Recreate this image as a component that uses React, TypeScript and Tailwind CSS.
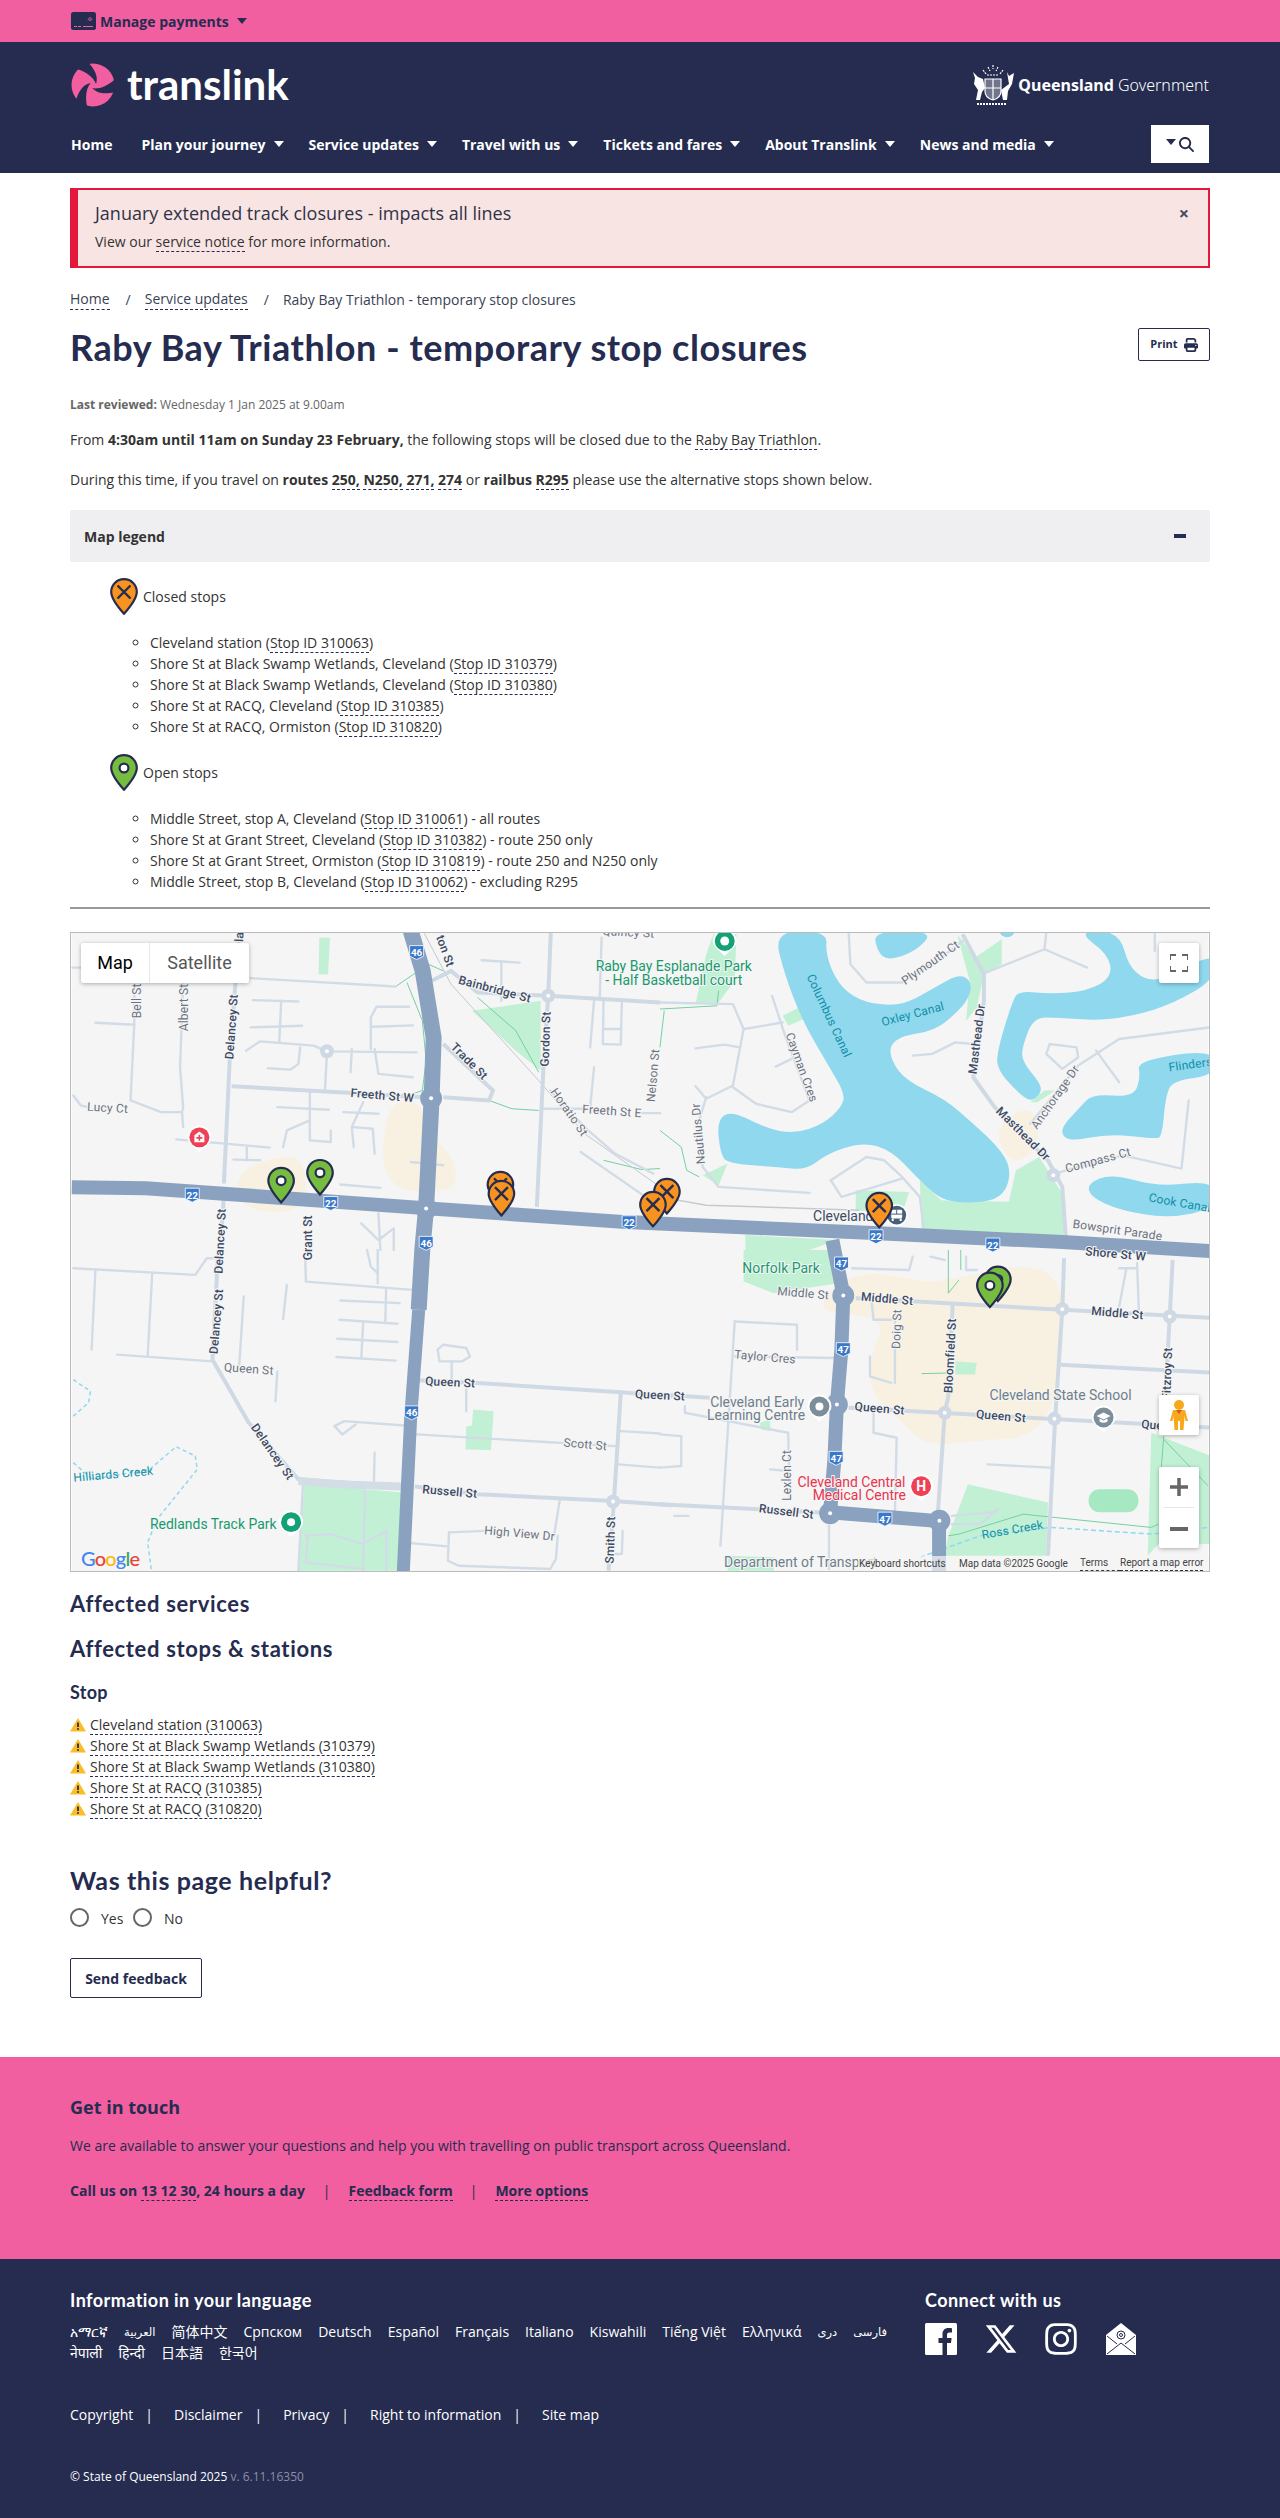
import type { ReactNode } from "react";
import { FaPrint, FaMagnifyingGlass, FaInstagram, FaXTwitter } from "react-icons/fa6";

type Pt = [number, number];
type Frame = "a" | "b" | "c" | "d";

// map is traced in four overlapping frames, all converted to page coords
const toPage = (f: Frame, [x, y]: Pt): Pt => {
    if (f === "a") return [60 + x / 2.613, 920 + y / 3];
    if (f === "b") return [660 + x / 2.8, 920 + y / 3];
    if (f === "c") return [60 + x / 2.613, 1250 + y / 3];
    return [660 + x / 2.8, 1250 + y / 3];
};

const line = (f: Frame, pts: Pt[]) =>
    pts.map((p, i) => {
        const [x, y] = toPage(f, p);
        return `${i ? "L" : "M"}${x.toFixed(1)} ${y.toFixed(1)}`;
    }).join(" ");

const blob = (f: Frame, pts: Pt[]) => {
    const p = pts.map((q) => toPage(f, q));
    const mid = (a: Pt, b: Pt): Pt => [(a[0] + b[0]) / 2, (a[1] + b[1]) / 2];
    const start = mid(p[p.length - 1], p[0]);
    let d = `M${start[0].toFixed(1)} ${start[1].toFixed(1)}`;
    p.forEach((q, i) => {
        const m = mid(q, p[(i + 1) % p.length]);
        d += ` Q${q[0].toFixed(1)} ${q[1].toFixed(1)} ${m[0].toFixed(1)} ${m[1].toFixed(1)}`;
    });
    return d + " Z";
};

const water: [Frame, Pt[]][] = [
    ["b", [[320, 30], [350, 160], [400, 300], [470, 430], [520, 520], [510, 560], [460, 610], [380, 640], [300, 625], [200, 570], [160, 600], [170, 700], [190, 730], [330, 740], [410, 750], [470, 700], [570, 665], [650, 690], [720, 770], [780, 830], [830, 848], [930, 845], [975, 810], [985, 740], [950, 680], [880, 610], [800, 535], [690, 480], [650, 420], [645, 375], [680, 345], [770, 330], [830, 280], [870, 230], [875, 180], [840, 160], [780, 195], [700, 245], [640, 255], [560, 240], [500, 190], [465, 100], [470, 30]]],
    ["b", [[600, 30], [770, 30], [720, 90], [640, 120], [610, 90]]],
    ["b", [[1010, 210], [1100, 220], [1200, 210], [1270, 170], [1260, 100], [1170, 30], [1290, 30], [1320, 150], [1400, 190], [1560, 90], [1560, 175], [1440, 250], [1330, 285], [1230, 300], [1120, 290], [1050, 290], [1020, 370], [1015, 420], [1070, 490], [1070, 520], [1040, 545], [1000, 510], [950, 450], [945, 400], [990, 240]]],
    ["b", [[1340, 420], [1560, 385], [1560, 465], [1440, 480], [1420, 530], [1410, 650], [1390, 655], [1260, 640], [1150, 665], [1120, 630], [1180, 560], [1215, 520], [1330, 530], [1350, 470]]],
    ["b", [[1200, 790], [1270, 760], [1400, 800], [1560, 780], [1560, 865], [1430, 895], [1290, 870], [1210, 830]]],
    ["b", [[945, 30], [1005, 30], [975, 55]]],
    ["b", [[670, 30], [700, 30], [690, 50]]],
];

const parks: [Frame, Pt[]][] = [
    ["a", [[675, 50], [703, 50], [698, 160], [673, 160]]],
    ["a", [[1075, 270], [1255, 240], [1255, 450], [1190, 390]]],
    ["b", [[100, 250], [130, 100], [150, 40], [215, 40], [210, 180], [165, 245]]],
    ["b", [[345, 285], [390, 260], [405, 295], [360, 315]]],
    ["b", [[120, 765], [190, 730], [165, 795]]],
    ["b", [[730, 780], [790, 840], [980, 845], [1000, 750], [1065, 710], [1130, 820], [1140, 950], [735, 930]]],
    ["b", [[550, 810], [700, 815], [680, 880], [550, 870]]],
    ["b", [[835, 40], [885, 110], [960, 55], [960, 130], [910, 160], [890, 260], [860, 300], [870, 180]]],
    ["b", [[1040, 545], [1080, 510], [1110, 510], [1060, 545]]],
    ["b", [[240, 945], [500, 960], [420, 990], [240, 990]]],
    ["c", [[635, 705], [895, 730], [880, 965], [620, 965]]],
    ["c", [[1078, 480], [1132, 485], [1125, 602], [1058, 600], [1060, 530], [1075, 528]]],
    ["d", [[235, 0], [470, 0], [500, 100], [320, 130], [235, 95]]],
    ["d", [[830, 335], [890, 340], [885, 375], [830, 375]]],
    ["d", [[865, 705], [1090, 760], [1085, 920], [800, 920], [810, 860]]],
    ["d", [[1380, 550], [1560, 625], [1560, 885], [1400, 885], [1370, 920]]],
    ["d", [[190, 920], [320, 925], [320, 965], [190, 965]]],
    ["d", [[280, 520], [310, 510], [310, 545], [285, 540]]],
];

const cream: [Frame, Pt[]][] = [
    ["a", [[850, 540], [945, 545], [945, 620], [1000, 680], [1035, 735], [1030, 820], [835, 810]]],
    ["a", [[455, 750], [600, 700], [640, 740], [640, 880], [465, 870]]],
    ["b", [[935, 620], [1050, 545], [1070, 680], [985, 740]]],
    ["d", [[540, 60], [730, 90], [770, 100], [1120, 20], [1140, 300], [1080, 560], [880, 575], [750, 590], [680, 520], [590, 430], [590, 320], [640, 200], [420, 190]]],
];

const smallRoads: [Frame, Pt[]][] = [
    ["a", [[495, 172], [875, 197]]], ["a", [[28, 140], [55, 140]]],
    ["a", [[190, 190], [190, 310], [180, 540], [260, 575], [315, 575], [318, 620]]], ["a", [[88, 306], [190, 312]]],
    ["a", [[318, 190], [310, 440], [318, 560], [315, 575]]], ["a", [[30, 525], [50, 555], [70, 560]]],
    ["a", [[500, 238], [620, 242]]], ["a", [[575, 240], [570, 365]]], ["a", [[495, 320], [630, 315]]],
    ["a", [[483, 390], [520, 362], [660, 375], [695, 392], [930, 395]]], ["a", [[625, 380], [620, 430], [600, 447], [540, 443]]],
    ["a", [[695, 392], [690, 505]]], ["a", [[760, 385], [757, 455]]], ["a", [[820, 385], [830, 460], [920, 470]]],
    ["a", [[910, 258], [825, 258], [810, 290], [810, 385]]], ["a", [[815, 318], [920, 314]]],
    ["a", [[565, 560], [700, 568]]], ["a", [[650, 515], [650, 660], [705, 665], [705, 630]]], ["a", [[580, 680], [590, 630], [650, 600]]],
    ["a", [[738, 575], [830, 580]]], ["a", [[790, 545], [760, 620], [765, 680]]], ["a", [[765, 620], [815, 625], [820, 700]]],
    ["a", [[300, 657], [545, 682]]], ["a", [[485, 682], [485, 720]]], ["a", [[450, 718], [520, 720]]],
    ["a", [[730, 793], [835, 803]]], ["a", [[915, 725], [1000, 735]]],
    ["a", [[1100, 118], [1200, 125]]], ["a", [[1152, 120], [1152, 240]]], ["a", [[1415, 50], [1410, 235]]],
    ["a", [[1395, 240], [1385, 380]]], ["a", [[1420, 240], [1418, 370], [1465, 372], [1468, 245]]], ["a", [[1418, 325], [1465, 325]]],
    ["a", [[1395, 440], [1385, 560]]], ["a", [[1280, 510], [1370, 620], [1450, 700], [1550, 760]]], ["a", [[1262, 565], [1365, 565]]],
    ["a", [[1360, 695], [1530, 830]]], ["a", [[1520, 578], [1568, 578]]], ["a", [[830, 880], [835, 990]]], ["a", [[785, 910], [830, 960], [870, 925], [870, 990]]],
    ["b", [[0, 245], [205, 250], [235, 325], [205, 495], [130, 535], [100, 497]]],
    ["b", [[530, 37], [535, 130], [580, 185], [680, 185], [790, 110], [850, 60]]],
    ["b", [[915, 155], [1080, 85], [1085, 37]]], ["b", [[1080, 85], [1200, 140]]], ["b", [[1390, 37], [1390, 90]]],
    ["b", [[315, 225], [350, 340], [420, 540], [370, 575], [270, 550], [205, 500]]],
    ["b", [[100, 383], [180, 372], [225, 380]]], ["b", [[325, 438], [370, 415]]], ["b", [[237, 325], [345, 305]]],
    ["b", [[710, 405], [765, 400], [830, 365], [880, 370]]], ["b", [[1040, 610], [1175, 435], [1290, 355], [1560, 318]]],
    ["b", [[1130, 445], [1085, 400], [1095, 370], [1170, 380], [1175, 410], [1130, 445]]], ["b", [[1225, 390], [1290, 485]]],
    ["b", [[1100, 765], [1140, 750], [1300, 705], [1465, 745], [1485, 540]]],
    ["b", [[130, 530], [110, 600], [120, 740], [165, 800], [420, 818]]],
    ["b", [[480, 780], [580, 710], [630, 720], [680, 770], [730, 830], [740, 920]]], ["b", [[480, 780], [510, 830], [680, 775]]],
    ["c", [[30, 55], [350, 75], [380, 25], [400, 25]]], ["c", [[88, 60], [78, 300]]], ["c", [[237, 70], [225, 320]]], ["c", [[145, 315], [395, 335]]],
    ["c", [[477, 140], [465, 345]]], ["c", [[590, 105], [580, 208]]], ["c", [[638, 30], [640, 95], [920, 120]]], ["c", [[730, 152], [885, 160]]],
    ["c", [[850, 120], [848, 215]]], ["c", [[728, 210], [880, 222]]], ["c", [[790, 220], [785, 325]]], ["c", [[722, 267], [880, 277]]], ["c", [[720, 322], [875, 333]]],
    ["c", [[800, 0], [810, 50], [828, 70]]], ["c", [[828, 0], [828, 100]]], ["c", [[565, 365], [560, 455]]],
    ["c", [[1022, 335], [1022, 395]]], ["c", [[1060, 420], [1060, 485]]], ["c", [[985, 300], [1000, 285], [1060, 295], [1070, 320], [1050, 335], [990, 335], [985, 300]]],
    ["c", [[715, 530], [740, 515], [900, 528]]], ["c", [[715, 530], [735, 555], [770, 525]]], ["c", [[930, 555], [1450, 590]]],
    ["c", [[820, 610], [818, 695]]], ["c", [[1465, 545], [1568, 552]]], ["c", [[1458, 645], [1568, 655]]],
    ["c", [[915, 882], [1010, 892]]], ["c", [[1015, 850], [1110, 845]]], ["c", [[1290, 860], [1305, 755]]],
    ["c", [[1015, 850], [1012, 935], [1040, 950], [1280, 960], [1295, 930], [1300, 860]]], ["c", [[1470, 845], [1468, 915], [1450, 915]]],
    ["c", [[632, 705], [620, 965]]], ["c", [[795, 725], [790, 965]]], ["c", [[640, 860], [705, 855], [790, 885], [850, 845], [850, 965]]], ["c", [[645, 860], [640, 940], [790, 960]]],
    ["d", [[210, 215], [385, 225], [385, 300]]], ["d", [[210, 215], [170, 890]]], ["d", [[210, 320], [490, 325]]],
    ["d", [[0, 555], [60, 560], [60, 650], [0, 655]]], ["d", [[70, 470], [70, 490], [360, 550], [365, 750]]],
    ["d", [[600, 470], [600, 550], [665, 565], [660, 790]]], ["d", [[660, 190], [660, 400]]], ["d", [[595, 160], [600, 210], [650, 210]]],
    ["d", [[590, 320], [590, 380], [650, 400]]], ["d", [[920, 645], [1095, 655]]], ["d", [[310, 660], [360, 665]]], ["d", [[40, 800], [80, 800]]], ["d", [[475, 830], [475, 960]]],
    ["d", [[1290, 170], [1310, 55]]], ["d", [[1290, 55], [1335, 55]]], ["d", [[1340, 40], [1345, 180]]],
    ["d", [[820, 800], [930, 790], [950, 780], [900, 825], [820, 825]]], ["d", [[710, 20], [700, 60], [540, 55]]], ["d", [[760, 20], [800, 30]]], ["d", [[860, 20], [860, 60], [890, 60]]],
];

const midRoads: [Frame, Pt[]][] = [
    ["a", [[465, 30], [455, 190], [440, 420], [425, 790]]], ["a", [[425, 830], [415, 990]]],
    ["c", [[410, 0], [395, 330], [490, 520], [620, 690], [890, 712]]],
    ["c", [[925, 712], [1090, 735], [1445, 755], [1600, 768]]],
    ["d", [[0, 765], [450, 790]]],
    ["a", [[1282, 30], [1275, 225], [1262, 450], [1245, 860]]],
    ["a", [[445, 497], [750, 517], [950, 530]]], ["a", [[1000, 530], [1120, 540], [1130, 510], [1000, 370]]],
    ["a", [[970, 180], [1020, 150], [1090, 215], [1275, 225], [1568, 245]]],
    ["b", [[850, 40], [910, 160], [910, 240], [880, 470], [940, 560], [1090, 720], [1130, 800], [1140, 950]]],
    ["c", [[935, 392], [1090, 400], [1465, 428], [1600, 440]]], ["c", [[1465, 430], [1448, 740]]], ["c", [[1447, 760], [1433, 965]]],
    ["d", [[0, 435], [140, 445]]], ["d", [[550, 145], [720, 155], [1130, 180], [1560, 205]]],
    ["d", [[822, 165], [810, 440], [800, 490], [780, 800]]], ["d", [[1135, 25], [1130, 180], [1110, 510], [1090, 920]]],
    ["d", [[1440, 30], [1432, 200], [1420, 435]]], ["d", [[1125, 345], [1560, 370]]], ["d", [[530, 475], [1560, 535]]],
];

const greenPaths: [Frame, Pt[]][] = [
    ["a", [[875, 197], [960, 130], [1000, 150]]], ["a", [[905, 185], [945, 300], [955, 420], [945, 510], [920, 520]]],
    ["a", [[1120, 540], [1180, 565], [1250, 570]]], ["a", [[1420, 720], [1520, 748], [1568, 745]]], ["a", [[1090, 230], [1190, 330], [1250, 455]]],
    ["b", [[0, 630], [60, 680], [75, 750], [110, 770]]], ["b", [[0, 265], [160, 255], [165, 210]]], ["b", [[12, 270], [0, 380]]],
    ["c", [[1025, 562], [1150, 570]]],
    ["d", [[735, 372], [820, 370]]], ["d", [[810, 860], [840, 855], [1020, 795], [1380, 835], [1400, 825]]], ["d", [[1415, 560], [1405, 700]]], ["d", [[1415, 570], [1540, 710]]],
    ["d", [[810, 0], [810, 130], [840, 90]]], ["d", [[845, 0], [845, 60]]],
];

const labels: [Frame, number, number, number, string, string][] = [
    ["a", 197, 240, -90, "Bell St", "g"], ["a", 320, 260, -90, "Albert St", "g"], ["a", 445, 318, -86, "Delancey St", "r"], ["a", 120, 562, 3, "Lucy Ct", "g"],
    ["a", 840, 525, 5, "Freeth St W", "r"], ["a", 1068, 422, 45, "Trade St", "r"], ["a", 1135, 205, 15, "Bainbridge St", "r"], ["a", 1268, 355, -88, "Gordon St", "r"],
    ["a", 1005, 90, 70, "ton St", "r"], ["a", 1550, 465, -85, "Nelson St", "g"], ["a", 1330, 575, 55, "Horatio St", "g"], ["a", 1442, 572, 4, "Freeth St E", "g"],
    ["a", 415, 963, -87, "Delancey St", "r"], ["a", 645, 953, -90, "Grant St", "r"], ["a", 465, 48, -88, "la", "r"], ["a", 1485, 34, 3, "Quincy St", "g"],
    ["b", 760, 125, -35, "Plymouth Ct", "g"], ["b", 475, 285, 65, "Columbus Canal", "t"], ["b", 710, 280, -15, "Oxley Canal", "t"], ["b", 398, 440, 70, "Cayman Cres", "g"],
    ["b", 108, 640, -95, "Nautilus Dr", "g"], ["b", 890, 355, -83, "Masthead Dr", "r"], ["b", 1020, 640, 45, "Masthead Dr", "r"], ["b", 1110, 530, -55, "Anchorage Dr", "g"],
    ["b", 1230, 720, -15, "Compass Ct", "g"], ["b", 1490, 432, -8, "Flinders", "t"], ["b", 1460, 848, 10, "Cook Canal", "t"], ["b", 1285, 930, 8, "Bowsprit Parade", "g"],
    ["d", 1280, 12, 5, "Shore St W", "r"],
    ["c", 405, 215, -85, "Delancey St", "r"], ["c", 490, 358, 4, "Queen St", "g"],
    ["c", 1018, 398, 3, "Queen St", "r"], ["d", 0, 437, 3, "Queen St", "r"], ["c", 1372, 585, 5, "Scott St", "g"], ["c", 552, 607, 55, "Delancey St", "r"],
    ["c", 1017, 727, 5, "Russell St", "r"], ["c", 1200, 853, 5, "High View Dr", "g"], ["c", 1438, 873, -88, "Smith St", "r"], ["c", 135, 675, -5, "Hilliards Creek", "t"],
    ["d", 402, 130, 5, "Middle St", "g"], ["d", 638, 147, 5, "Middle St", "r"], ["d", 1285, 190, 5, "Middle St", "r"], ["d", 665, 238, -88, "Doig St", "g"],
    ["d", 815, 318, -87, "Bloomfield St", "r"], ["d", 1425, 372, -88, "Fitzroy St", "r"], ["d", 295, 322, 5, "Taylor Cres", "g"], ["d", 617, 477, 5, "Queen St", "r"],
    ["d", 958, 500, 5, "Queen St", "r"], ["d", 1422, 530, 5, "Queen St", "r"], ["d", 358, 678, -90, "Lexlen Ct", "g"], ["d", 355, 787, 7, "Russell St", "r"], ["d", 990, 842, -10, "Ross Creek", "t"],
];

const pois: [Frame, number, number, string, string][] = [
    ["a", 1604, 135, "Raby Bay Esplanade Park", "#189a6e"], ["a", 1604, 177, "- Half Basketball court", "#189a6e"],
    ["c", 397, 826, "Redlands Track Park", "#189a6e"], ["d", 340, 55, "Norfolk Park", "#189a6e"],
    ["d", 273, 457, "Cleveland Early", "#6f7f8b"], ["d", 270, 498, "Learning Centre", "#6f7f8b"], ["d", 1125, 436, "Cleveland State School", "#6f7f8b"],
    ["d", 538, 697, "Cleveland Central", "#e8344e"], ["d", 560, 738, "Medical Centre", "#e8344e"], ["d", 395, 940, "Department of Transport", "#6f7f8b"], ["b", 515, 888, "Cleveland", "#3c4a63"],
];

const shields: [Frame, number, number, string][] = [
    ["a", 930, 95, "46"], ["a", 955, 970, "46"], ["c", 917, 490, "46"], ["a", 342, 825, "22"], ["a", 705, 850, "22"], ["a", 1487, 908, "22"], ["b", 607, 950, "22"], ["b", 935, 975, "22"],
    ["d", 510, 42, "47"], ["d", 515, 300, "47"], ["d", 495, 627, "47"], ["d", 632, 810, "47"],
];

const junctions: [Frame, number, number, boolean][] = [
    ["a", 968, 533, true], ["a", 955, 865, true], ["d", 515, 137, true], ["d", 497, 465, true], ["d", 478, 792, true], ["d", 785, 815, true],
    ["d", 1130, 178, false], ["d", 1432, 200, false], ["d", 800, 490, false], ["d", 1108, 508, false], ["c", 1445, 757, false], ["b", 1105, 765, false], ["a", 1275, 225, false], ["a", 695, 392, false],
];

const stopPins: [number, number, boolean][] = [
    [500, 1207, true], [501, 1216, true], [667, 1214, true], [653, 1227, true], [880, 1228, true],
    [280, 1203, false], [319, 1195, false], [999, 1302, false], [991, 1308, false],
];

const labelColor: Record<string, string> = { r: "#3c4a63", g: "#6b7280", t: "#0e8fa6" };

function PinShape({ closed }: { closed: boolean }) {
    return (
        <>
            <path d="M14 1.2C6.6 1.2 1.2 7 1.2 14c0 6.4 8 16.4 12.8 21.8C18.8 30.4 26.8 20.4 26.8 14 26.8 7 21.4 1.2 14 1.2Z" fill={closed ? "#f7931e" : "#76bc3f"} stroke="#252c4f" strokeWidth="2.2" />
            {closed ? (
                <path d="M7.5 7.5 20.5 20.5M20.5 7.5 7.5 20.5" stroke="#252c4f" strokeWidth="2.4" />
            ) : (
                <circle cx="14" cy="14" r="4.4" fill="#fff" stroke="#252c4f" strokeWidth="2.2" />
            )}
        </>
    );
}

function LegendPin({ closed }: { closed: boolean }) {
    return (
        <svg width="28" height="37" viewBox="0 0 28 37" className="shrink-0">
            <PinShape closed={closed} />
        </svg>
    );
}

function Poi({ x, y, color, children }: { x: number; y: number; color: string; children?: ReactNode }) {
    return (
        <g transform={`translate(${x} ${y})`}>
            <path d="M-12 0A12 12 0 1 1 12 0C12 6 5 10 0 15-5 10-12 6-12 0Z" fill="#fff" />
            <circle r="10" fill={color} />
            {children}
        </g>
    );
}

function MapDrawing() {
    return (
        <svg viewBox="70 932 1140 640" className="block w-full h-full" style={{ fontFamily: "Roboto, sans-serif" }}>
            <rect x="70" y="932" width="1140" height="640" fill="#f5f5f5" />
            {cream.map(([f, p], i) => <path key={i} d={blob(f, p)} fill="#f8f1e2" />)}
            {parks.map(([f, p], i) => <path key={i} d={line(f, p) + " Z"} fill="#c2f0d5" />)}
            <rect x="1090" y="1490" width="50" height="23" rx="11" fill="#a5e8c2" />
            {water.map(([f, p], i) => <path key={i} d={blob(f, p)} fill="#8fd8ee" />)}
            {greenPaths.map(([f, p], i) => <path key={i} d={line(f, p)} fill="none" stroke="#74cfa3" strokeWidth="1" />)}
            <path d={line("a", [[950, 37], [1020, 190], [1250, 480], [1370, 640], [1568, 800]])} fill="none" stroke="#c4c9cf" strokeWidth="1" />
            <path d={line("b", [[0, 830], [130, 855], [560, 870]])} fill="none" stroke="#c4c9cf" strokeWidth="1.5" />
            <path d={line("c", [[30, 390], [75, 425], [70, 460], [30, 500]])} fill="none" stroke="#8fd8ee" strokeWidth="1.5" strokeDasharray="4 3" />
            <path d={line("c", [[30, 640], [80, 690], [230, 660], [300, 592], [350, 620], [355, 660], [250, 810], [225, 880], [235, 965]])} fill="none" stroke="#8fd8ee" strokeWidth="1.5" strokeDasharray="4 3" />
            <path d={line("d", [[730, 925], [900, 860], [1100, 835], [1380, 855], [1540, 835]])} fill="none" stroke="#8fd8ee" strokeWidth="1.5" strokeDasharray="5 3" />
            {smallRoads.map(([f, p], i) => <path key={i} d={line(f, p)} fill="none" stroke="#d2dce6" strokeWidth="2.4" strokeLinejoin="round" strokeLinecap="round" />)}
            {midRoads.map(([f, p], i) => <path key={i} d={line(f, p)} fill="none" stroke="#cfd9e3" strokeWidth="4" strokeLinejoin="round" />)}
            <path d={line("c", [[620, 695], [720, 705], [892, 712]])} fill="none" stroke="#d3dde6" strokeWidth="8" />
            {junctions.map(([f, x, y, major], i) => {
                const [cx, cy] = toPage(f, [x, y]);
                return (
                    <g key={i}>
                        <circle cx={cx} cy={cy} r={major ? 11 : 7} fill={major ? "#8aa2bf" : "#cfd9e3"} />
                        <circle cx={cx} cy={cy} r="2" fill="#fff" />
                    </g>
                );
            })}
            <g fill="none" stroke="#8aa2bf" strokeLinejoin="round">
                <path d="M70 1187 L144 1188 L424 1208 L626 1222 L874 1233 L1064 1242 L1212 1251" strokeWidth="14" />
                <path d="M410 930 L422 970 L433 1037 L431 1097 L425.5 1207 L421.6 1250 L418 1310" strokeWidth="16" />
                <path d="M418 1310 L410 1417 L402.5 1574" strokeWidth="13" />
                <path d="M833 1240 L844 1295 L842 1350 L837.5 1405 L835 1460 L830.7 1513 L940 1522 L940 1574" strokeWidth="14" />
            </g>
            {junctions.filter((j) => j[3]).map(([f, x, y], i) => {
                const [cx, cy] = toPage(f, [x, y]);
                return <circle key={i} cx={cx} cy={cy} r="2" fill="#fff" />;
            })}
            {shields.map(([f, x, y, t], i) => {
                const [cx, cy] = toPage(f, [x, y]);
                return (
                    <g key={i} transform={`translate(${cx} ${cy})`}>
                        <path d="M-7-7H7V3.5L0 7-7 3.5Z" fill="#3a78c9" stroke="#fff" strokeWidth="0.8" strokeLinejoin="round" />
                        <text y="3.5" textAnchor="middle" fontSize="10" fontWeight="700" fill="#fff">{t}</text>
                    </g>
                );
            })}
            {labels.map(([f, x, y, rot, t, k], i) => {
                const [cx, cy] = toPage(f, [x, y]);
                return (
                    <text key={i} transform={`translate(${cx} ${cy}) rotate(${rot})`} y="4" textAnchor="middle" fontSize="12" fontWeight={k === "r" ? 500 : 400} fill={labelColor[k]} stroke={k === "t" ? "none" : "#f5f5f5"} strokeWidth="2" paintOrder="stroke" letterSpacing="0.2">{t}</text>
                );
            })}
            {pois.map(([f, x, y, t, c], i) => {
                const [cx, cy] = toPage(f, [x, y]);
                return (
                    <text key={i} transform={`translate(${cx} ${cy})`} y="5" textAnchor="middle" fontSize="14" fill={c} stroke="#f5f5f5" strokeWidth="2" paintOrder="stroke">{t}</text>
                );
            })}
            <Poi x={198} y={1137} color="#ef4056">
                <path d="M-5 5V-2L0-6 5-2V5Z" fill="#fff" />
                <path d="M0-2.5V3.5M-3 .5H3" stroke="#ef4056" strokeWidth="1.6" />
            </Poi>
            <Poi x={725} y={940} color="#13a175"><circle r="4.5" fill="#fff" /></Poi>
            <Poi x={290} y={1523} color="#13a175"><circle r="4" fill="#fff" /></Poi>
            <Poi x={820} y={1407} color="#7b8e9a"><circle r="4" fill="#fff" /></Poi>
            <Poi x={1105} y={1418} color="#7b8e9a">
                <path d="M0-5-7-1.5 0 2 7-1.5ZM-4 1V4Q0 6.5 4 4V1L0 3Z" fill="#fff" />
            </Poi>
            <Poi x={922} y={1487} color="#ef4056">
                <text y="5" textAnchor="middle" fontSize="14" fontWeight="700" fill="#fff">H</text>
            </Poi>
            <g transform="translate(897.5 1215)">
                <circle r="11" fill="#fff" />
                <circle r="9.5" fill="#46607a" />
                <rect x="-5.5" y="-5.5" width="11" height="9" rx="1.5" fill="#fff" />
                <path d="M-5.5-1H5.5M0-5.5V-1" stroke="#46607a" />
                <path d="M-4 3.5V6M4 3.5V6" stroke="#fff" strokeWidth="2" />
            </g>
            {stopPins.map(([x, y, closed], i) => (
                <g key={i} transform={`translate(${x - 14} ${y - 36.5})`}>
                    <PinShape closed={closed} />
                </g>
            ))}
        </svg>
    );
}

function DashLink({ children, bold }: { children: ReactNode; bold?: boolean }) {
    return <a className={`border-b border-dashed border-[#252c4f] ${bold ? "font-bold" : ""}`}>{children}</a>;
}

function Caret({ className }: { className: string }) {
    return <span className={`inline-block w-0 h-0 border-x-[5px] border-x-transparent border-t-[6px] ${className}`} />;
}

function Triskele() {
    return (
        <svg width="44" height="44" viewBox="-22 -22 44 44" className="shrink-0">
            <circle r="21.5" fill="#f15fa1" />
            {[0, 120, 240].map((a) => (
                <path key={a} transform={`rotate(${a})`} d="M-16-22-5-23C0-17 6-10 3-1 1-7-6-13-16-16Z" fill="#252c4f" />
            ))}
        </svg>
    );
}

function Crest() {
    return (
        <svg width="44" height="42" viewBox="0 0 44 42" className="shrink-0" fill="none" stroke="#fff" strokeWidth="1.2">
            <path d="M22 1v4M17 3l2 4M27 3l-2 4M12 6l3 4M32 6l-3 4M16 11h12" strokeDasharray="2 1" />
            <path d="M14 15H30V27Q30 34 22 36 14 34 14 27Z" fill="#fff" fillOpacity="0.35" />
            <path d="M22 15V36M14 24H30" />
            <path d="M2 8 4 14 3 20 7 26 5 36 9 36 11 28 14 24 12 15 7 13Z" fill="#fff" stroke="none" />
            <path d="M43 9 38 12 36 8 38 20 30 26 32 36 36 36 37 27 41 20Z" fill="#fff" stroke="none" />
            <path d="M6 40H35" strokeWidth="2" strokeDasharray="2 1" />
        </svg>
    );
}

function Warning() {
    return (
        <svg width="16" height="14" viewBox="0 0 16 14" className="shrink-0">
            <path d="M8 0 16 13.5H0Z" fill="#fbbd23" />
            <path d="M8 4.5V9" stroke="#252c4f" strokeWidth="1.8" />
            <circle cx="8" cy="11" r="1" fill="#252c4f" />
        </svg>
    );
}

const navItems = [
    ["Plan your journey", "ml-[29px]"],
    ["Service updates", "ml-[25px]"],
    ["Travel with us", "ml-[25px]"],
    ["Tickets and fares", "ml-[25px]"],
    ["About Translink", "ml-[25px]"],
    ["News and media", "ml-[25px]"],
];

const closedStops = [
    ["Cleveland station", "310063"],
    ["Shore St at Black Swamp Wetlands, Cleveland", "310379"],
    ["Shore St at Black Swamp Wetlands, Cleveland", "310380"],
    ["Shore St at RACQ, Cleveland", "310385"],
    ["Shore St at RACQ, Ormiston", "310820"],
];

const openStops = [
    ["Middle Street, stop A, Cleveland", "310061", " - all routes"],
    ["Shore St at Grant Street, Cleveland", "310382", " - route 250 only"],
    ["Shore St at Grant Street, Ormiston", "310819", " - route 250 and N250 only"],
    ["Middle Street, stop B, Cleveland", "310062", " - excluding R295"],
];

const affected = [
    "Cleveland station (310063)",
    "Shore St at Black Swamp Wetlands (310379)",
    "Shore St at Black Swamp Wetlands (310380)",
    "Shore St at RACQ (310385)",
    "Shore St at RACQ (310820)",
];

const languages = ["አማርኛ", "العربية", "简体中文", "Српском", "Deutsch", "Español", "Français", "Italiano", "Kiswahili", "Tiếng Việt", "Ελληνικά", "دری", "فارسی", "नेपाली", "हिन्दी", "日本語", "한국어"];
const arabicScript = ["العربية", "دری", "فارسی"];

const heading = "font-['Lato','Noto_Sans',sans-serif] text-[#252c4f]";

export default function App() {
    return (
        <div className="font-['Open_Sans','Noto_Sans','Noto_Sans_CJK_SC',sans-serif] text-[14px] text-[#333] bg-white w-[1280px] h-[2518px] overflow-hidden">
            {/* top bar */}
            <div className="bg-[#f15fa1] h-[42px] pl-[71px] flex items-center text-[#252c4f] font-bold text-[14px]">
                <svg width="25" height="18" viewBox="0 0 25 18" className="shrink-0">
                    <rect width="25" height="18" rx="2.5" fill="#252c4f" />
                    <path d="M3 14.5h3M7 14.5h3M12 14.5h10" stroke="#f15fa1" strokeWidth="1" />
                    <path d="M17 8q2-5 4 0M18 9q1-3 2 0" stroke="#f15fa1" strokeWidth="0.8" fill="none" />
                </svg>
                <span className="ml-[4px]">Manage payments</span>
                <Caret className="ml-[8px] border-t-[#252c4f]" />
            </div>

            {/* header */}
            <header className="bg-[#252c4f] h-[131px] px-[71px] text-white">
                <div className="flex items-center justify-between h-[83px] pt-[3px]">
                    <div className="flex items-center gap-[12px]">
                        <Triskele />
                        <span className="font-['Lato',sans-serif] font-bold text-[42px] leading-none pb-[2px]">translink</span>
                    </div>
                    <div className="flex items-center gap-[3px]">
                        <Crest />
                        <span className="text-[16px] font-['Noto_Sans',sans-serif]"><b>Queensland</b> <span className="font-light">Government</span></span>
                    </div>
                </div>
                <nav className="flex items-center font-bold text-[14px]">
                    <a>Home</a>
                    {navItems.map(([label, ml]) => (
                        <a key={label} className={`flex items-center ${ml}`}>
                            {label}
                            <Caret className="ml-[8px] border-t-white" />
                        </a>
                    ))}
                    <button className="ml-auto w-[58px] h-[38px] bg-white flex items-center justify-center gap-[3px] text-[#252c4f]">
                        <Caret className="border-t-[#252c4f] -mt-[4px]" />
                        <FaMagnifyingGlass size={15} />
                    </button>
                </nav>
            </header>

            <main className="px-[70px]">
                {/* alert */}
                <div className="mt-[15px] h-[80px] border-2 border-l-[8px] border-[#e4173c] bg-[#f9e4e4] pl-[17px] pr-[20px] relative">
                    <p className="text-[18px] leading-[24px] mt-[11px] text-[#2f3347]">January extended track closures - impacts all lines</p>
                    <p className="text-[14px] leading-[20px] mt-[7px]">View our <DashLink>service notice</DashLink> for more information.</p>
                    <span className="absolute right-[19px] top-[12px] text-[#444b5d] font-bold text-[18px] leading-[22px]">×</span>
                </div>

                {/* breadcrumb */}
                <div className="mt-[21px] flex items-center h-[20px] text-[#3a3f55]">
                    <DashLink>Home</DashLink>
                    <span className="ml-[16px] mr-[14px]">/</span>
                    <DashLink>Service updates</DashLink>
                    <span className="ml-[16px] mr-[14px]">/</span>
                    <span>Raby Bay Triathlon - temporary stop closures</span>
                </div>

                <div className="mt-[13px] flex items-center justify-between h-[50px]">
                    <h1 className={`${heading} text-[36px] tracking-[0.55px] font-bold leading-[50px]`}>Raby Bay Triathlon - temporary stop closures</h1>
                    <button className="w-[72px] h-[33px] -mt-[5px] border border-[#252c4f] rounded-[2px] flex items-center justify-center gap-[6px] text-[11px] font-bold text-[#252c4f]">
                        Print <FaPrint size={14} />
                    </button>
                </div>

                <p className="mt-[24px] text-[12px] leading-[18px] text-[#666]"><b>Last reviewed:</b> Wednesday 1 Jan 2025 at 9.00am</p>
                <p className="mt-[16px] leading-[20px]">From <b>4:30am until 11am on Sunday 23 February,</b> the following stops will be closed due to the <DashLink>Raby Bay Triathlon</DashLink>.</p>
                <p className="mt-[20px] leading-[20px]">During this time, if you travel on <b>routes</b> <DashLink bold>250,</DashLink> <DashLink bold>N250,</DashLink> <DashLink bold>271,</DashLink> <DashLink bold>274</DashLink> or <b>railbus</b> <DashLink bold>R295</DashLink> please use the alternative stops shown below.</p>

                {/* legend */}
                <div className="mt-[20px] h-[52px] bg-[#efeff1] rounded-[2px] flex items-center justify-between pl-[14px] pr-[24px] font-bold text-[#333]">
                    Map legend
                    <span className="w-[12px] h-[4px] bg-[#252c4f]" />
                </div>
                <div className="pl-[40px] mt-[16px] flex items-center gap-[5px] h-[37px]">
                    <LegendPin closed />
                    <span className="pb-[1px]">Closed stops</span>
                </div>
                <ul className="mt-[17px] pl-[80px] list-[circle] leading-[21px]">
                    {closedStops.map(([name, id]) => (
                        <li key={id}>{name} (<DashLink>Stop ID {id}</DashLink>)</li>
                    ))}
                </ul>
                <div className="pl-[40px] mt-[17px] flex items-center gap-[5px] h-[37px]">
                    <LegendPin closed={false} />
                    <span className="pb-[1px]">Open stops</span>
                </div>
                <ul className="mt-[17px] pl-[80px] list-[circle] leading-[21px]">
                    {openStops.map(([name, id, rest]) => (
                        <li key={id}>{name} (<DashLink>Stop ID {id}</DashLink>){rest}</li>
                    ))}
                </ul>
                <hr className="mt-[15px] border-t-2 border-[#999]" />

                {/* map */}
                <div className="relative mt-[23px] h-[640px] border border-[#bbb] overflow-hidden">
                    <MapDrawing />
                    <div className="absolute left-[10px] top-[10px] h-[40px] flex bg-white rounded-[2px] shadow-[0_1px_4px_rgba(0,0,0,0.3)] font-['Roboto',sans-serif] text-[18px] leading-[40px]">
                        <span className="w-[69px] text-center text-black border-r border-[#e6e6e6]">Map</span>
                        <span className="w-[99px] text-center text-[#565656]">Satellite</span>
                    </div>
                    <div className="absolute right-[10px] top-[10px] w-[40px] h-[40px] bg-white rounded-[2px] shadow-[0_1px_4px_rgba(0,0,0,0.3)] flex items-center justify-center">
                        <svg width="18" height="18" viewBox="0 0 18 18" fill="none" stroke="#666" strokeWidth="2"><path d="M0 6V1H6M12 1H18V6M18 12V17H12M6 17H0V12" /></svg>
                    </div>
                    <div className="absolute right-[10px] top-[462px] w-[40px] h-[40px] bg-white rounded-[2px] shadow-[0_1px_4px_rgba(0,0,0,0.3)] flex items-center justify-center">
                        <svg width="18" height="32" viewBox="0 0 18 32">
                            <circle cx="9" cy="6" r="5" fill="#f7a81b" />
                            <path d="M3 11H15L18 22H15.5L14.5 17 13.5 31H10V22H8V31H4.5L3.5 17 2.5 22H0Z" fill="#f7a81b" />
                            <path d="M6 11 9 15 12 11Z" fill="#d9572b" />
                        </svg>
                    </div>
                    <div className="absolute right-[10px] top-[534px] w-[40px] h-[81px] bg-white rounded-[2px] shadow-[0_1px_4px_rgba(0,0,0,0.3)] flex flex-col items-center">
                        <svg width="18" height="18" viewBox="0 0 18 18" className="mt-[11px]"><path d="M0 9H18M9 0V18" stroke="#666" strokeWidth="3.5" /></svg>
                        <span className="w-[30px] h-px bg-[#e6e6e6] mt-[11px]" />
                        <span className="w-[18px] h-[3.5px] bg-[#666] mt-[19px]" />
                    </div>
                    <span className="absolute left-[10px] bottom-[1px] font-['Lato',sans-serif] text-[20px] font-medium leading-[24px] tracking-[-0.8px]">
                        <span className="text-[#4285f4]">G</span><span className="text-[#ea4335]">o</span><span className="text-[#fbbc05]">o</span><span className="text-[#4285f4]">g</span><span className="text-[#34a853]">l</span><span className="text-[#ea4335]">e</span>
                    </span>
                    <div className="absolute right-0 bottom-0 h-[15px] w-[351px] bg-[#f5f5f5]/70 flex items-center font-['Roboto',sans-serif] text-[10px] text-[#444] leading-[14px]">
                        <span className="ml-[1px] w-[100px]">Keyboard shortcuts</span>
                        <span className="w-[121px]">Map data ©2025 Google</span>
                        <span className="w-[40px] border-b border-dashed border-[#333]">Terms</span>
                        <span className="border-b border-dashed border-[#333]">Report a map error</span>
                    </div>
                </div>

                <h2 className={`${heading} mt-[18px] text-[22px] tracking-[0.65px] font-bold leading-[28px]`}>Affected services</h2>
                <h2 className={`${heading} mt-[17px] text-[22px] tracking-[0.65px] font-bold leading-[28px]`}>Affected stops &amp; stations</h2>
                <h3 className={`${heading} mt-[17px] text-[18px] tracking-[0.3px] font-bold leading-[24px]`}>Stop</h3>
                <ul className="mt-[10px] leading-[21px]">
                    {affected.map((s) => (
                        <li key={s} className="flex items-center gap-[4px] h-[21px]">
                            <Warning />
                            <span><DashLink>{s}</DashLink></span>
                        </li>
                    ))}
                </ul>

                <h2 className={`${heading} mt-[44px] text-[25px] tracking-[0.6px] font-bold leading-[34px]`}>Was this page helpful?</h2>
                <div className="mt-[9px] flex items-center h-[22px]">
                    <span className="w-[19px] h-[19px] rounded-full border-2 border-[#666]" />
                    <span className="ml-[12px] mt-[3px] w-[32px]">Yes</span>
                    <span className="w-[19px] h-[19px] rounded-full border-2 border-[#666]" />
                    <span className="ml-[12px] mt-[3px]">No</span>
                </div>
                <button className="mt-[30px] block w-[132px] h-[40px] border border-[#252c4f] rounded-[2px] font-bold text-[#252c4f]">Send feedback</button>
            </main>

            {/* get in touch */}
            <section className="mt-[59px] h-[202px] bg-[#f15fa1] px-[70px] pt-[37px] text-[#252c4f]">
                <h4 className="text-[18px] font-bold leading-[26px]">Get in touch</h4>
                <p className="mt-[16px] leading-[20px]">We are available to answer your questions and help you with travelling on public transport across Queensland.</p>
                <p className="mt-[25px] leading-[20px] font-bold flex">
                    <span>Call us on <DashLink>13 12 30</DashLink>, 24 hours a day</span>
                    <span className="ml-[18px] font-normal">|</span>
                    <span className="ml-[18px]"><DashLink>Feedback form</DashLink></span>
                    <span className="ml-[17px] font-normal">|</span>
                    <span className="ml-[18px]"><DashLink>More options</DashLink></span>
                </p>
            </section>

            {/* footer */}
            <footer className="bg-[#252c4f] h-[259px] px-[70px] pt-[29px] text-white">
                <div className="flex">
                    <div className="w-[855px]">
                        <h4 className="font-['Lato',sans-serif] text-[18px] tracking-[0.45px] font-bold leading-[24px]">Information in your language</h4>
                        <div className="mt-[9px] flex flex-wrap gap-x-[16px] leading-[21px] font-['Open_Sans','Noto_Sans','DejaVu_Sans','Noto_Sans_CJK_SC',sans-serif]">
                            {languages.map((l) => <a key={l} className={arabicScript.includes(l) ? "text-[11.5px]" : ""}>{l}</a>)}
                        </div>
                    </div>
                    <div>
                        <h4 className="font-['Lato',sans-serif] text-[18px] tracking-[0.45px] font-bold leading-[24px]">Connect with us</h4>
                        <div className="mt-[9px] flex items-center">
                            <svg width="32" height="32" viewBox="0 0 32 32">
                                <rect width="32" height="32" rx="1.5" fill="#fff" />
                                <path d="M22 32V20h4l.6-5H22v-3c0-1.4.6-2.4 2.5-2.4H27V5.200c-.6-.1-2-.2-3.500-.2-3.500 0-6 2.100-6 6V15h-4v5h4v12Z" fill="#252c4f" />
                            </svg>
                            <FaXTwitter size={34} className="ml-[27px]" />
                            <FaInstagram size={36} className="ml-[25px]" />
                            <svg width="30" height="32" viewBox="0 0 30 32" className="ml-[27px]" fill="#fff">
                                <path d="M15 0 30 12V32H0V12Z" />
                                <path d="M1 13 11 21M29 13 19 21M1 31 15 20 29 31" stroke="#252c4f" fill="none" />
                                <circle cx="15" cy="12" r="4" fill="none" stroke="#252c4f" />
                                <circle cx="15" cy="12" r="1.5" fill="none" stroke="#252c4f" />
                            </svg>
                        </div>
                    </div>
                </div>
                <div className="mt-[42px] flex leading-[20px]">
                    <a>Copyright</a><span className="ml-[12px]">|</span>
                    <a className="ml-[21px]">Disclaimer</a><span className="ml-[12px]">|</span>
                    <a className="ml-[21px]">Privacy</a><span className="ml-[12px]">|</span>
                    <a className="ml-[21px]">Right to information</a><span className="ml-[12px]">|</span>
                    <a className="ml-[21px]">Site map</a>
                </div>
                <p className="mt-[43px] text-[12px] leading-[18px]">© State of Queensland 2025 <span className="text-[#8a8fa3]">v. 6.11.16350</span></p>
            </footer>
        </div>
    );
}
